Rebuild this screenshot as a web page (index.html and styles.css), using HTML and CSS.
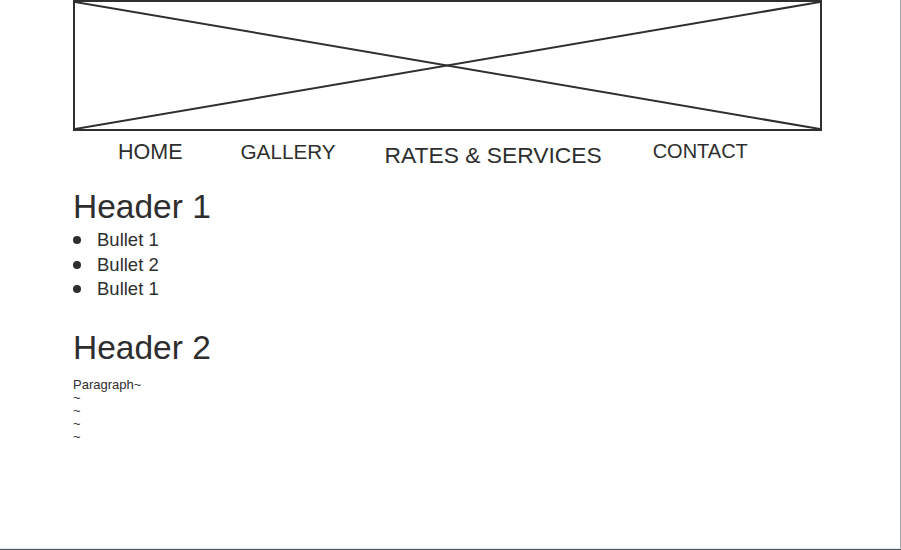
FILE: index.html
```html
<!DOCTYPE html>
<html lang="en">
<head>
    <meta charset="UTF-8">
    <meta name="viewport" content="width=device-width, initial-scale=1.0">
    <title>Wireframe</title>
    <link rel="stylesheet" href="styles.css">
</head>
<body>
    <div class="page">
        <div class="hero">
            <svg class="hero-x" width="100%" height="100%">
                <line x1="0" y1="0" x2="100%" y2="100%"></line>
                <line x1="0" y1="100%" x2="100%" y2="0"></line>
            </svg>
        </div>
        <nav class="nav">
            <a class="nav-home" href="#">HOME</a>
            <a class="nav-gallery" href="#">GALLERY</a>
            <a class="nav-rates" href="#">RATES &amp; SERVICES</a>
            <a class="nav-contact" href="#">CONTACT</a>
        </nav>
        <h1 class="header">Header 1</h1>
        <ul class="bullets">
            <li>Bullet 1</li>
            <li>Bullet 2</li>
            <li>Bullet 1</li>
        </ul>
        <h2 class="header header-2">Header 2</h2>
        <p class="para">Paragraph~<br>~<br>~<br>~<br>~</p>
    </div>
</body>
</html>
```

FILE: styles.css
```css
html { background-color: #4f575f; }
body { margin: 0; font-family: "Liberation Sans", Arial, sans-serif; color: #2e2e2e; }
.page {
    width: 827px;
    height: 548px;
    padding-left: 73px;
    background-color: white;
    border-right: 1px solid #a6aaaf;
    border-bottom: 1px solid #dfe6ee;
    overflow: hidden;
}
.hero {
    box-sizing: border-box;
    width: 749px;
    height: 131px;
    border: 2px solid #2f2f2f;
}
.hero-x { display: block; }
.hero-x line { stroke: #2f2f2f; stroke-width: 2; }

.nav {
    display: flex;
    align-items: flex-start;
    margin-top: 9px;
    padding-left: 45px;
}
.nav a { color: #2e2e2e; text-decoration: none; }
.nav-home { font-size: 21.5px; margin-right: 58px; }
.nav-gallery { font-size: 20.7px; margin-right: 49px; }
.nav-rates { font-size: 22.8px; margin-right: 51px; margin-top: 2px; }
.nav-contact { font-size: 20px; }

.header {
    margin: 19px 0 0;
    font-size: 33.5px;
    font-weight: normal;
}
.header-2 { margin-top: 27px; }

.bullets {
    list-style: none;
    margin: 2px 0 0;
    padding: 0;
    font-size: 18.5px;
    line-height: 24.5px;
}
.bullets li { display: flex; align-items: center; }
.bullets li::before {
    content: "";
    width: 8px;
    height: 8px;
    border-radius: 50%;
    background-color: #2e2e2e;
    margin-right: 16px;
}

.para {
    margin: 11px 0 0;
    font-size: 13px;
    line-height: 13px;
}
```
